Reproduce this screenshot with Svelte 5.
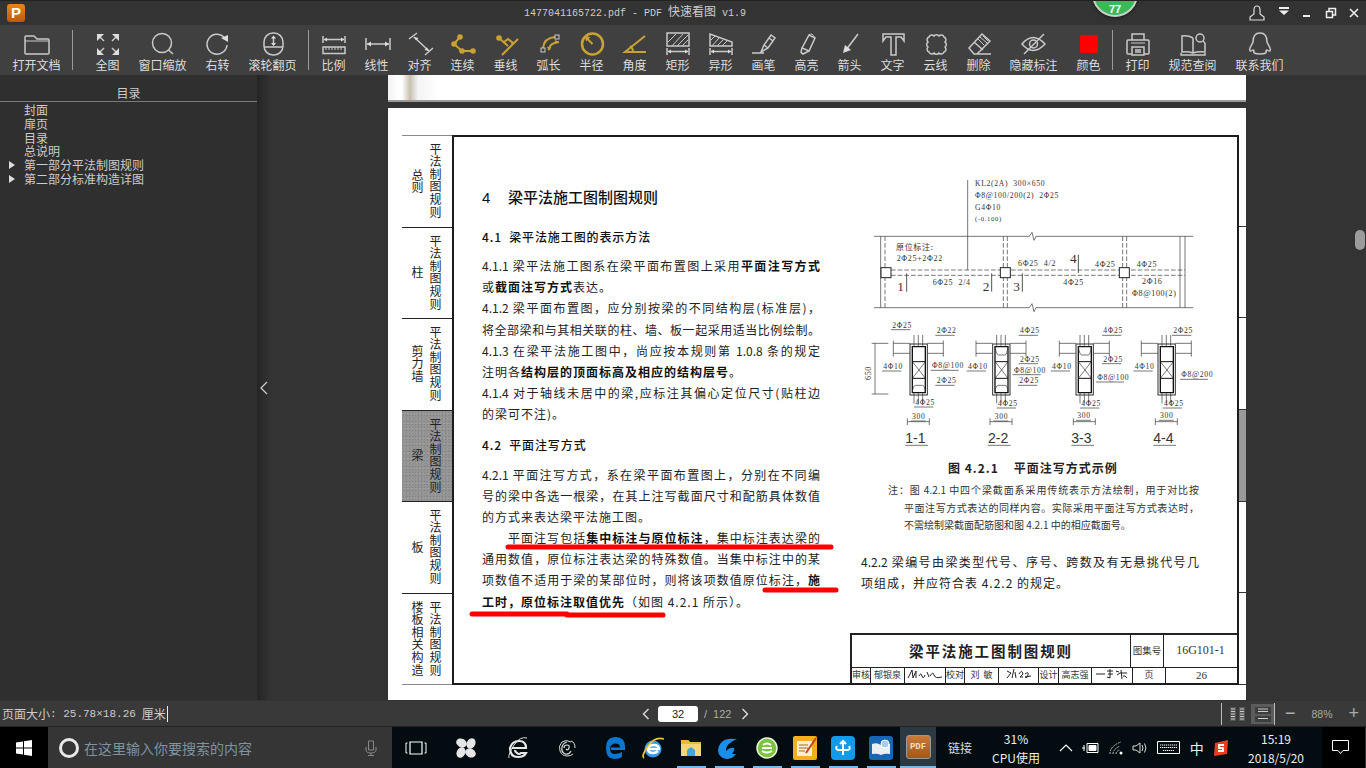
<script>
  const dimH = (y) => `<path d="M6 ${y - 3.5}v7M28 ${y - 3.5}v7M7 ${y}h20"/><path class="f" d="M7 ${y}l3-2v4zM27 ${y}l-3-2v4z"/>`;

  /* icons are drawn in a 34x28 box */
  const icons = {
    folder: `<path d="M5 22V6q0-1 1-1h8l3 3h11q1 0 1 1v13q0 1-1 1H6q-1 0-1-1z"/><path d="M5 10h24" stroke-width="1"/>`,
    fit: `<path d="M9 6l4 4M25 6l-4 4M9 21l4-4M25 21l-4-4"/><path class="f" d="M6 3h7L6 10zM28 3h-7l7 7zM6 24h7l-7-7zM28 24h-7l7-7z"/>`,
    zoom: `<circle cx="16" cy="12" r="9.5"/><path d="M22.5 19l4.5 4"/>`,
    rotate: `<path d="M23 6A10 10 0 1 0 26 14"/><path class="f" d="M20 7l7-3v7z"/>`,
    wheel: `<rect x="8" y="2" width="19" height="22" rx="9"/><path d="M8 16h19M17.5 6v8"/><path class="f" d="M17.5 4.5l-2.5 3h5zM17.5 15l-2.5-3h5z"/>`,
    scale: dimH(8.5) + `<rect x="6" y="16" width="22" height="6.5"/><path d="M9 16v3M12 16v3M15 16v3M18 16v3M21 16v3M24 16v3" stroke-width="1"/>`,
    line: `<path d="M6 7v12M30 7v12M7 13h22"/><path class="f" d="M7 13l4-2.5v5zM29 13l-4-2.5v5z"/>`,
    align: `<path d="M6 8l8-6M22 24l8-7M11 6l15 14"/><path class="f" d="M11 6l4.5 1-2.5 2.5zM26 20l-4.5-1 2.5-2.5z"/>`,
    chain: `<g class="g"><path d="M14 6l-6 7 8 7h11" stroke-width="2"/><circle class="gf" cx="14" cy="6" r="2.8"/><circle class="gf" cx="8" cy="13" r="2.8"/><circle class="gf" cx="16" cy="20" r="2.8"/><circle class="gf" cx="27" cy="20" r="2.8"/></g>`,
    perp: `<g class="g"><path d="M10 7l9 8M29 8L13 24M15 11l4-3 5 4-1.5 1" stroke-width="2"/><circle class="gf" cx="10" cy="7" r="2.8"/></g>`,
    arc: `<g class="g"><path d="M11 17Q12 7 23 6M17 19Q17 12 27 11" stroke-width="2"/><path class="gf" d="M27 11l-4-2v4zM17 20l-2-4h4z"/></g><rect x="9" y="17" width="4" height="4" stroke-width="1"/><rect x="23" y="4" width="4" height="4" stroke-width="1"/>`,
    radius: `<g class="g"><circle cx="17.5" cy="13" r="10.5" stroke-width="2.5"/><path d="M17.5 13l-7-7" stroke-width="2"/><path class="gf" d="M10 5l5.5 1-4.5 4.5z"/></g>`,
    angle: `<g class="g"><path d="M28 21H7L27 5M15 21q0-4-3-6" stroke-width="2"/></g>`,
    rect: `<rect x="6" y="2" width="22" height="13"/><path d="M7 11l8-8M11 15L22 3M16 15L27 4M21 15l6-6" stroke-width="1"/>` + dimH(20.5),
    poly: `<path d="M6 3v12h22v-4z"/><path d="M7 9l4-4M8 15l7-8M13 15l6-6M18 15l5-5" stroke-width="1"/>` + dimH(20.5),
    pen: `<path d="M14 21l3-7L24 4l4 3-7 10zM17 14l4 3M22 7l4 3M5 22h12"/>`,
    marker: `<path d="M12 17l7-13 6 3-6 13zM12 17l-1 4 2 2 6-3M14 23l-3-1"/><path d="M19 4q3-3 6 3" stroke-width="1"/>`,
    arrow: `<path d="M25 3L13 19"/><path class="f" d="M10 22l2-8 6 5z"/>`,
    text: `<path d="M7 3h21v7l-3-4h-5v18h-5V6h-5l-3 4z"/>`,
    cloud: `<path d="M10 6a3 3 0 0 1 5-1a3 3 0 0 1 5 0a3 3 0 0 1 5 1a3 3 0 0 1 1 5a3 3 0 0 1 0 5a3 3 0 0 1-1 5a3 3 0 0 1-5 1a3 3 0 0 1-5 0a3 3 0 0 1-5-1a3 3 0 0 1-1-5a3 3 0 0 1 0-5a3 3 0 0 1 1-5z"/>`,
    eraser: `<path d="M7 17L20 3l8 7-13 13h-3zM12 11l9 8M13 23h16"/><path d="M18 6l7 6M21 5l5 5M16 8l6 6" stroke-width="1"/>`,
    eye: `<path d="M5 13q11-13 23 0-12 13-23 0z"/><circle cx="16.5" cy="13" r="4"/><path d="M27 3L7 23"/>`,
    color: `<rect class="red" x="8" y="4" width="18" height="18" rx="2"/>`,
    print: `<path d="M11 9V3h12v6M11 23H7q-1 0-1-1V10q0-1 1-1h20q1 0 1 1v12q0 1-1 1h-4M11 16h12v8H11zM14 19h6M14 21h6"/><path d="M10 12h14" stroke-width="1"/>`,
    book: `<path d="M17 7q-5-3-11-2v16q6-1 11 1 5-2 12-1v-9M17 7v15M5 22v2h24v-2"/><circle cx="24" cy="7" r="4"/><path d="M27 10l2 2"/>`,
    qq: `<path d="M17 2c-5 0-7 4-7 9l-3 6c-1 3 0 4 3 2l1 1c-1 2 1 3 6 3s7-1 6-3l1-1c3 2 4 1 3-2l-3-6c0-5-2-9-7-9z"/>`
  };

  const tools = [
    { l: '打开文档', i: 'folder', w: 67 }, 'sep',
    { l: '全图', i: 'fit' }, { l: '窗口缩放', i: 'zoom', w: 67 }, { l: '右转', i: 'rotate' }, { l: '滚轮翻页', i: 'wheel', w: 67 }, 'sep',
    { l: '比例', i: 'scale' }, { l: '线性', i: 'line' }, { l: '对齐', i: 'align' }, { l: '连续', i: 'chain' }, { l: '垂线', i: 'perp' },
    { l: '弧长', i: 'arc' }, { l: '半径', i: 'radius' }, { l: '角度', i: 'angle' }, { l: '矩形', i: 'rect' }, { l: '异形', i: 'poly' },
    { l: '画笔', i: 'pen' }, { l: '高亮', i: 'marker' }, { l: '箭头', i: 'arrow' }, { l: '文字', i: 'text' }, { l: '云线', i: 'cloud' },
    { l: '删除', i: 'eraser' }, { l: '隐藏标注', i: 'eye', w: 67 }, { l: '颜色', i: 'color' }, 'sep',
    { l: '打印', i: 'print' }, { l: '规范查阅', i: 'book', w: 67 }, { l: '联系我们', i: 'qq', w: 67 }
  ];

  const toc = [
    { t: '封面' }, { t: '扉页' }, { t: '目录' }, { t: '总说明' },
    { t: '第一部分平法制图规则', kids: true }, { t: '第二部分标准构造详图', kids: true }
  ];

  const tabs = [
    { name: '总则' }, { name: '柱' }, { name: '剪力墙' }, { name: '梁', on: true }, { name: '板' }, { name: '楼板相关构造' }
  ];

  /* section drawing, coordinates are 3x screen px */
  const sections = [
    { dx: 0, name: '1-1', bot: 1, labels: [['2Φ25', 127, 473], ['2Φ22', 260, 490], ['4Φ10', 100, 597], ['Φ8@100', 246, 595], ['2Φ25', 260, 640], ['4Φ25', 196, 705], ['300', 186, 747]] },
    { dx: 248, name: '2-2', top: 1, bot: 1, labels: [['4Φ25', 510, 490], ['2Φ25', 510, 575], ['4Φ10', 354, 597], ['Φ8@100', 492, 608], ['2Φ25', 508, 640], ['4Φ25', 444, 708], ['300', 434, 747]] },
    { dx: 498, name: '3-3', top: 1, labels: [['4Φ25', 760, 490], ['2Φ25', 760, 575], ['4Φ10', 606, 597], ['Φ8@100', 742, 630], ['4Φ25', 694, 708], ['300', 682, 745]] },
    { dx: 744, name: '4-4', labels: [['2Φ25', 970, 490], ['4Φ10', 854, 597], ['Φ8@200', 994, 622], ['4Φ25', 942, 708], ['300', 930, 745]] }
  ];

  const beamLabels = [
    ['KL2(2A)  300×650', 375, 47, 23], ['Φ8@100/200(2)  2Φ25', 375, 85, 23], ['G4Φ10', 375, 120, 23], ['(-0.100)', 375, 153, 20],
    ['2Φ25+2Φ22', 140, 274, 24], ['6Φ25  2/4', 248, 345, 24], ['6Φ25  4/2', 504, 289, 24], ['4Φ25', 735, 291, 24],
    ['4Φ25', 640, 345, 24], ['4Φ25', 860, 291, 24], ['2Φ16', 876, 341, 24], ['Φ8@100(2)', 846, 378, 24],
    ['1', 142, 364, 40], ['2', 398, 364, 40], ['3', 490, 364, 40], ['4', 660, 280, 40]
  ];

  const petals = [0, 90, 180, 270];
</script>

<div class="win">
  <header class="titlebar">
    <div class="logo">P</div>
    <div class="title">1477041165722.pdf - PDF <span>快速看图</span> v1.9</div>
    <div class="badge">77</div>
    <div class="winbtns">
      <svg width="16" height="16" viewBox="0 0 16 16"><path d="M5 9V5q0-4 3-4t3 4v4l4 3v3H1v-3z" fill="none" stroke="#ddd" stroke-width="1.2"/></svg>
      <svg width="12" height="12" viewBox="0 0 12 12"><path d="M1 0h10v2H1zM1 3.5h10L6 8z" fill="#eee"/></svg>
      <svg width="10" height="10" viewBox="0 0 10 10"><path d="M1 7h7v2H1z" fill="#eee"/></svg>
      <svg width="12" height="12" viewBox="0 0 12 12"><path d="M1.5 4.5h6v6h-6zM4 4V1.5h6.5V8H8" fill="none" stroke="#eee" stroke-width="1.5"/></svg>
      <svg width="10" height="10" viewBox="0 0 10 10"><path d="M1 1l8 8M9 1L1 9" stroke="#eee" stroke-width="1.6"/></svg>
    </div>
  </header>

  <nav class="toolbar">
    {#each tools as t}
      {#if t === 'sep'}
        <span class="sep"></span>
      {:else}
        <button class="tool" style="width:{t.w ?? 43}px">
          <svg class="ico" width="34" height="28" viewBox="0 0 34 28">{@html icons[t.i]}</svg>
          <span>{t.l}</span>
        </button>
      {/if}
    {/each}
  </nav>

  <main class="main">
    <aside class="side">
      <div class="side-head">目录</div>
      <ul>
        {#each toc as row}
          <li class:kids={row.kids}>{row.t}</li>
        {/each}
      </ul>
    </aside>
    <div class="strip">
      <svg width="8" height="14" viewBox="0 0 8 14"><path d="M7 1L1 7l6 6" fill="none" stroke="#ccc" stroke-width="1.3"/></svg>
    </div>

    <div class="viewer">
      <div class="stub"></div>
      <article class="page">
        <div class="tabs">
          {#each tabs as tab}
            <div class="tab" class:on={tab.on}>
              <span class="tab-name">{tab.name}</span>
              <span class="tab-rule">平法制图规则</span>
            </div>
          {/each}
        </div>

        <div class="frame">
          <div class="col-left">
            <h1><i>4</i>梁平法施工图制图规则</h1>
            <h2 class="h-a">4.1&nbsp; 梁平法施工图的表示方法</h2>
            <p class="ln full first">4.1.1 梁平法施工图系在梁平面布置图上采用<b>平面注写方式</b></p>
            <p class="ln">或<b>截面注写方式</b>表达。</p>
            <p class="ln full">4.1.2 梁平面布置图，应分别按梁的不同结构层(标准层)，</p>
            <p class="ln full">将全部梁和与其相关联的柱、墙、板一起采用适当比例绘制。</p>
            <p class="ln full">4.1.3 在梁平法施工图中，尚应按本规则第 1.0.8 条的规定</p>
            <p class="ln">注明各<b>结构层的顶面标高及相应的结构层号</b>。</p>
            <p class="ln full">4.1.4 对于轴线未居中的梁,应标注其偏心定位尺寸(贴柱边</p>
            <p class="ln">的梁可不注)。</p>
            <h2 class="h-b">4.2&nbsp; 平面注写方式</h2>
            <p class="ln full first">4.2.1 平面注写方式，系在梁平面布置图上，分别在不同编</p>
            <p class="ln full">号的梁中各选一根梁，在其上注写截面尺寸和配筋具体数值</p>
            <p class="ln">的方式来表达梁平法施工图。</p>
            <p class="ln full indent">平面注写包括<b>集中标注与原位标注</b>，集中标注表达梁的</p>
            <p class="ln full">通用数值，原位标注表达梁的特殊数值。当集中标注中的某</p>
            <p class="ln full">项数值不适用于梁的某部位时，则将该项数值原位标注，<b>施</b></p>
            <p class="ln"><b>工时，原位标注取值优先</b>（如图 4.2.1 所示）。</p>
          </div>

          <div class="col-right">
            <svg class="drawing" width="370" height="290" viewBox="0 0 1110 870">
              <g class="thin">
                <path d="M353 30V300" />
                <path d="M72 199H538l8-12 6 24 6-12H1030M72 413H538l8-12 6 24 6-12H1030" />
                <path d="M92 199V413M990 199V413M1005 199V413" />
                <path d="M105 199V413M460 199V413M472 199V413M818 199V413M830 199V413M123 300H1005M123 316H1005" stroke-dasharray="14 6" />
                <path d="M170 310v55M425 310v55M517 310v55M685 254v55" stroke-width="2.5" />
              </g>
              <rect class="col" x="93" y="293" width="30" height="30" />
              <rect class="col" x="451" y="293" width="30" height="30" />
              <rect class="col" x="808" y="293" width="30" height="30" />
              <text class="cjk" x="138" y="240">原位标注:</text>
              {#each beamLabels as b}
                <text class="lab" x={b[1]} y={b[2]} font-size={b[3]}>{b[0]}</text>
              {/each}

              <g class="thin">
                <path d="M75 520V672M65 520h50M65 672h50" />
              </g>
              <text class="lab" x="0" y="0" font-size="24" transform="translate(62 630) rotate(-90)">650</text>

              {#each sections as s}
                <g transform="translate({s.dx} 0)">
                  <path class="thin" d="M130 520H180M232 520H280M130 550H180M232 550H280M130 512v48M280 512v48" />
                  <rect class="beam" x="180" y="522" width="52" height="153" />
                  <path class="stir" d="M187 530H226V668H187Z" />
                  <path class="thin" d="M187 575L207 600 187 625M226 575L207 600 226 625" />
                  <path class="stir2" d="M187 575H226M187 625H226" />
                  {#if s.top}<path class="thin" d="M187 530q4 25 10 25h20q6 0 9-25" />{/if}
                  {#if s.bot}<path class="thin" d="M187 668q2-22 10-22h20q8 0 9 22" />{/if}
                  <path class="thin" d="M192 495V530M205 495V530M218 495V530M192 668V700M205 668V700M218 668V700" />
                  <path class="thin" d="M172 745v20M238 745v20M172 755H238" />
                  <text class="sec" x="166" y="818">{s.name}</text>
                  <path class="thin" d="M166 826H234" />
                </g>
                {#each s.labels as l}
                  <text class="lab" x={l[1]} y={l[2]} font-size="23">{l[0]}</text>
                  <path class="thin" d="M{l[1] - 4} {l[2] + 6}h{l[0].length * 13 + 6}" />
                {/each}
              {/each}
            </svg>

            <div class="caption">图 4.2.1&nbsp;&nbsp;&nbsp; 平面注写方式示例</div>
            <div class="note">
              <p class="full">注：图 4.2.1 中四个梁截面系采用传统表示方法绘制，用于对比按</p>
              <p class="sub full">平面注写方式表达的同样内容。实际采用平面注写方式表达时，</p>
              <p class="sub">不需绘制梁截面配筋图和图 4.2.1 中的相应截面号。</p>
            </div>
            <div class="next">
              <p class="ln full">4.2.2 梁编号由梁类型代号、序号、跨数及有无悬挑代号几</p>
              <p class="ln">项组成，并应符合表 4.2.2 的规定。</p>
            </div>

            <div class="stamp">
              <div class="stamp-top">
                <div class="stamp-title">梁平法施工图制图规则</div>
                <div class="stamp-key">图集号</div>
                <div class="stamp-val">16G101-1</div>
              </div>
              <div class="stamp-row">
                <span style="width:19px">审核</span>
                <span style="width:34px">郁银泉</span>
                <span style="width:41px"><svg width="38" height="12" viewBox="0 0 38 12"><path d="M2 10L6 2l1 8 3-7v7M13 8q2-4 3 0t3-1M21 4l2 5M24 8q3-5 4-1 1 4 8 2" fill="none" stroke="#222"/></svg></span>
                <span style="width:19px">校对</span>
                <span style="width:34px">刘&nbsp; 敏</span>
                <span style="width:40px"><svg width="30" height="12" viewBox="0 0 30 12"><path d="M3 3l4 2-4 5M10 1L8 10M11 4l1 6M15 6q3-5 4 0l-3 3h3M21 6q4-3 3 1t-3 2l6-1" fill="none" stroke="#222"/></svg></span>
                <span style="width:20px">设计</span>
                <span style="width:33px">高志强</span>
                <span style="width:41px"><svg width="34" height="12" viewBox="0 0 34 12"><path d="M1 6h9M12 3h6M15 1v9l-3-1M13 6h5M21 3l3 1M22 7l3-2M26 2l1 9M25 5h7M28 8q2-1 4 2" fill="none" stroke="#222"/></svg></span>
                <span style="width:33px">页</span>
                <span class="end">26</span>
              </div>
            </div>
          </div>

          <svg class="marks" width="787" height="550" viewBox="452 135 787 550">
            <path d="M508 547H831" />
            <path d="M765 590H836" />
            <path d="M472 614H567" />
            <path d="M567 615H663" />
          </svg>
        </div>

        <div class="ticks">
          {#each tabs as tab}
            <div class="tick" class:on={tab.on}></div>
          {/each}
        </div>
      </article>
      <div class="thumb"></div>
    </div>
  </main>

  <footer class="status">
    <div class="size">页面大小<span class="mono">: 25.78×18.26</span>厘米<i class="caret"></i></div>
    <div class="pager">
      <svg width="8" height="12" viewBox="0 0 8 12"><path d="M6.5 1L1.5 6l5 5" fill="none" stroke="#ddd" stroke-width="1.4"/></svg>
      <div class="pageno">32</div>
      <span class="total">/ 122</span>
      <svg width="8" height="12" viewBox="0 0 8 12"><path d="M1.5 1l5 5-5 5" fill="none" stroke="#ddd" stroke-width="1.4"/></svg>
    </div>
    <div class="views">
      <div class="view">
        <svg width="18" height="16" viewBox="0 0 18 16"><path d="M1 1h6v14H1zM10 1h6v14h-6z" fill="#555" /><path d="M2 3h4M2 5.5h4M2 8h4M2 10.5h4M2 13h4M11 3h4M11 5.5h4M11 8h4M11 10.5h4M11 13h4" stroke="#ccc"/></svg>
      </div>
      <div class="view active">
        <svg width="18" height="18" viewBox="0 0 18 18"><path d="M1 2h16v7H1zM1 11h16v6H1z" fill="#3e3e3e" /><path d="M4 4h10M4 6.5h10M4 13.5h10" stroke="#ccc"/></svg>
      </div>
    </div>
    <div class="zoomer">
      <span>−</span>
      <em>88%</em>
      <span>+</span>
    </div>
  </footer>

  <div class="taskbar">
    <div class="start">
      <svg width="16" height="16" viewBox="0 0 16 16"><path d="M0 2.5l7-1v6H0zM8 1.3l8-1.3v7.5H8zM0 8.5h7v6l-7-1zM8 8.5h8V16l-8-1.3z" fill="#fff"/></svg>
    </div>
    <div class="search">
      <span class="ring"></span>
      <span class="hint">在这里输入你要搜索的内容</span>
      <svg class="mic" width="12" height="16" viewBox="0 0 12 16"><path d="M3.5 1h5v9h-5zM1 7v3q0 3 5 3t5-3V7M6 13v2M3 15.5h6" fill="none" stroke="#888"/></svg>
    </div>
    <div class="tb w48">
      <svg width="22" height="14" viewBox="0 0 22 14"><path d="M5 1h12v12H5z" fill="none" stroke="#fff" stroke-width="1.2"/><path d="M2.5 2H1v10h1.5M19.5 2H21v10h-1.5" fill="none" stroke="#fff"/></svg>
    </div>
    <div class="tb w52">
      <svg width="22" height="22" viewBox="0 0 22 22">
        {#each petals as a}
          <ellipse cx="6.5" cy="6" rx="5.5" ry="4.3" fill="#e6e6e6" transform="rotate({a} 11 11) rotate(25 6.5 6)" />
        {/each}
      </svg>
    </div>
    <div class="tb w51">
      <svg width="22" height="24" viewBox="0 0 22 24"><path d="M5 12h14q0-7-7-7T3 12q0 9 8 9 6 0 8-4h-5q-2 2-4 0-2-1-2-3" fill="none" stroke="#e8e8e8" stroke-width="2.2"/><path d="M2 22Q1 18 7 9t13-7" fill="none" stroke="#ddd"/></svg>
    </div>
    <div class="tb w53">
      <svg width="20" height="20" viewBox="0 0 20 20"><path d="M14 4q-5-3-9 0-4 4-2 9 2 5 7 5 4 0 6-2M18 10q0-6-4-7" fill="none" stroke="#ddd"/><path d="M10 4q-4 1-5 5-1 5 3 7 4 1 6-3M7 10q0-3 3-3t2 3-3 1" fill="none" stroke="#ddd" stroke-width="1.2"/></svg>
    </div>
    <div class="tb w38">
      <svg width="20" height="24" viewBox="0 0 20 24"><path d="M6 11.5h9q0-4-4.5-4T5 12q0 6 5 6 4 0 7-2v5q-3 2-8 2-8 0-8-11T11 1q9 0 9 10v3H6z" fill="#0a78d1"/></svg>
    </div>
    <div class="tb w38">
      <svg width="24" height="24" viewBox="0 0 24 24"><circle cx="12" cy="13" r="8.5" fill="#3a9be0"/><path d="M7 13h11q0-4-5.5-4T7 13q0 4 5 4 3 0 5-2" fill="none" stroke="#fff" stroke-width="2.5"/><path d="M3 22Q0 20 7 10T23 3" fill="none" stroke="#e8c23a" stroke-width="1.8"/></svg>
    </div>
    <div class="tb w38 on">
      <svg width="22" height="22" viewBox="0 0 22 22"><path d="M1 3h7l2 2h11v14H1z" fill="#f3d67a"/><path d="M1 3h7l2 2h11v2H1z" fill="#e8b93f"/><path d="M7 13l4-3 4 3v6H7z" fill="#3ea6dc"/></svg>
    </div>
    <div class="tb w38 on">
      <svg width="24" height="24" viewBox="0 0 24 24"><path d="M18 3Q6 1 2 10q-3 8 4 12 8 3 13-4-1 0-4 0 3-4 2-6-4-1-8 3-1-7 11-12z" fill="#1b8fe8"/></svg>
    </div>
    <div class="tb w38 on">
      <svg width="24" height="24" viewBox="0 0 24 24"><circle cx="12" cy="12" r="10" fill="#7cc43f" stroke="#e9f4dc" stroke-width="1.5"/><path d="M7 12h10M7 15q5 3 10 0M8 9q4-3 8 0" fill="none" stroke="#fff" stroke-width="2"/></svg>
    </div>
    <div class="tb w38 on">
      <svg width="24" height="24" viewBox="0 0 24 24"><rect width="24" height="24" rx="2" fill="#f2b01e"/><rect x="4" y="5" width="15" height="15" fill="#fbeed2"/><path d="M6 9h9M6 12h9M6 15h6" stroke="#a06a2a"/><path d="M23 2L13 17" stroke="#c8432a" stroke-width="2"/></svg>
    </div>
    <div class="tb w38 on">
      <svg width="24" height="24" viewBox="0 0 24 24"><rect width="24" height="24" rx="4" fill="#129bea"/><path d="M12 5v14M9 8l3-3 3 3M6 10q-2 3 1 4h10q3-1 1-4" fill="none" stroke="#fff" stroke-width="2"/></svg>
    </div>
    <div class="tb w38 on">
      <svg width="24" height="24" viewBox="0 0 24 24"><rect width="24" height="24" rx="3" fill="#1766b5"/><path d="M3 8q5-2 9 1 4-3 9-1v10q-5-1-9 1-4-2-9-1z" fill="#e9eef2"/><circle cx="16" cy="8" r="4" fill="#a8cbe6" stroke="#fff"/></svg>
    </div>
    <div class="tb app">
      <div class="pdfmark">PDF</div>
    </div>
    <div class="tray-link">链接</div>
    <div class="cpu"><div>31%</div><div>CPU使用</div></div>
    <div class="tray">
      <svg width="14" height="8" viewBox="0 0 14 8"><path d="M1 7l6-6 6 6" fill="none" stroke="#fff" stroke-width="1.2"/></svg>
      <svg width="17" height="12" viewBox="0 0 17 12"><path d="M5 1.5h11v9H5z" fill="none" stroke="#fff"/><path d="M7 3.5h7v5H7zM0 6h3M2 3v6" fill="#fff" stroke="#fff"/></svg>
      <svg width="14" height="14" viewBox="0 0 14 14"><path d="M1 13Q1 5 12 1M4 13q0-5 7-8M7 13q0-3 4-4" fill="none" stroke="#bbb" stroke-dasharray="2 .8"/><circle cx="12" cy="12" r="1.5" fill="#fff"/></svg>
      <svg width="16" height="14" viewBox="0 0 16 14"><path d="M1 5h3l4-3v10L4 9H1zM10 4q2 3 0 6M12.5 2.5q3 4.5 0 9" fill="none" stroke="#ddd"/></svg>
      <svg width="23" height="13" viewBox="0 0 23 13"><path d="M.5.5h22v12H.5z" fill="none" stroke="#fff"/><path d="M3 4h17M3 6.5h17M6 9.5h11" stroke="#fff" stroke-dasharray="1.3 .7"/></svg>
      <span class="ime">中</span>
      <svg width="16" height="16" viewBox="0 0 16 16"><path d="M2 3L15 0l-1 14-13 2z" fill="#e8401c"/><path d="M11 5H6v3h4v3H5" fill="none" stroke="#fff" stroke-width="1.8"/></svg>
    </div>
    <div class="clock"><div>15:19</div><div>2018/5/20</div></div>
    <div class="notify">
      <svg width="17" height="15" viewBox="0 0 17 15"><path d="M.5.5h16v10H11l-2.5 3-2.5-3H.5z" fill="none" stroke="#fff"/></svg>
    </div>
  </div>
</div>

<style>
  :global(body) {
    margin: 0;
    background: #333;
  }
  * { box-sizing: border-box; }

  .win {
    width: 1366px;
    height: 768px;
    display: flex;
    flex-direction: column;
    overflow: hidden;
    font-family: "Noto Sans CJK SC", "Liberation Sans", sans-serif;
    color: #ddd;
  }

  /* ── title bar ── */
  .titlebar {
    position: relative;
    flex: 0 0 25px;
    height: 25px;
    background: #333;
    border-top: 1px solid #222;
    overflow: hidden;
  }
  .logo {
    position: absolute;
    left: 7px;
    top: 3px;
    width: 18px;
    height: 18px;
    border-radius: 3px;
    background: linear-gradient(#e8861c, #b85c08);
    color: #fff;
    font: bold 15px/18px "Liberation Sans", sans-serif;
    text-align: center;
  }
  .title {
    position: absolute;
    left: 524px;
    top: 2px;
    font: 10px/20px "Liberation Mono", "Noto Sans CJK SC", monospace;
    color: #ccc;
    white-space: pre;
  }
  .title span {
    font-size: 12px;
  }
  .badge {
    position: absolute;
    left: 1092px;
    top: -30px;
    width: 46px;
    height: 46px;
    border-radius: 50%;
    border: 2px solid #c8d0c8;
    background: #3cb85a;
    color: #fff;
    font: bold 11px/13px "Liberation Sans", sans-serif;
    padding-top: 30px;
    text-align: center;
    box-shadow: 0 1px 3px #0008;
  }
  .winbtns {
    position: absolute;
    left: 1249px;
    top: 4px;
    width: 110px;
    height: 16px;
    display: flex;
    align-items: center;
    justify-content: space-between;
  }

  /* ── toolbar ── */
  .toolbar {
    flex: 0 0 50px;
    height: 50px;
    background: #404040;
    display: flex;
    padding-left: 3px;
  }
  .tool {
    flex: none;
    height: 50px;
    padding: 6px 0 0;
    border: 0;
    background: none;
    color: #ddd;
    font: 12px/18px "Noto Sans CJK SC", sans-serif;
    display: flex;
    flex-direction: column;
    align-items: center;
    white-space: nowrap;
  }
  .tool span {
    margin-top: -3px;
  }
  .ico {
    flex: none;
    fill: none;
    stroke: #c9c9c9;
    stroke-width: 1.5;
  }
  .ico :global(.f) { fill: #ddd; stroke: none; }
  .ico :global(.g) { stroke: #c9a233; }
  .ico :global(.gf) { fill: #c9a233; stroke: none; }
  .ico :global(.red) { fill: #f00; stroke: none; }
  .sep {
    flex: none;
    width: 1px;
    height: 40px;
    margin: 5px 13px 0 2px;
    background: #9a9a9a;
  }
  .sep:nth-child(7) { margin: 5px 3px 0 2px; }
  .sep:nth-child(26) { margin: 5px 3px 0 2px; }

  /* ── main area ── */
  .main {
    flex: 0 0 625px;
    height: 625px;
    display: flex;
    background: #333;
    overflow: hidden;
  }
  .side {
    flex: 0 0 257px;
    background: #2f2f2f;
    font-size: 12px;
    color: #ccc;
  }
  .side-head {
    height: 27px;
    padding-top: 8px;
    line-height: 20px;
    text-align: center;
    border-bottom: 1px solid #7a7a7a;
  }
  .side ul {
    margin: 0;
    padding: 1px 0 0 24px;
    list-style: none;
  }
  .side li {
    position: relative;
    height: 13.8px;
    line-height: 14px;
    white-space: nowrap;
  }
  .kids::before {
    content: "";
    position: absolute;
    left: -15px;
    top: 3px;
    border-left: 6px solid #ddd;
    border-top: 4px solid transparent;
    border-bottom: 4px solid transparent;
  }
  .strip {
    flex: 0 0 13px;
    display: flex;
    align-items: center;
    justify-content: center;
    background: linear-gradient(90deg, #242424, #333);
  }
  .viewer {
    position: relative;
    flex: 1;
    padding-left: 118px;
    display: flex;
    flex-direction: column;
    gap: 6px;
  }
  .stub {
    flex: 0 0 27px;
    width: 858px;
    border-bottom: 2px solid #999;
    background: linear-gradient(90deg, #f2f2f2 0, #fff 10px, #fff 14px, #c8c0b0 22px, #f4f4f4 30px, #fff 50px);
  }
  .thumb {
    position: absolute;
    right: 1px;
    top: 155px;
    width: 10px;
    height: 20px;
    border-radius: 5px;
    background: #9c9c9c;
  }

  /* ── scanned page ── */
  .page {
    flex: none;
    width: 858px;
    height: 592px;
    padding: 27px 0 0 14px;
    background: #fff;
    display: flex;
    align-items: flex-start;
    color: #222;
  }
  .tabs {
    flex: 0 0 50px;
    height: 550px;
    display: flex;
    flex-direction: column;
    border-top: 1px solid #888;
  }
  .tab {
    flex: 1;
    display: flex;
    align-items: center;
    border-bottom: 1px solid #222;
  }
  .tab:last-child { border-bottom-color: #888; }
  .tab.on {
    background-color: #939393;
    background-image:
      radial-gradient(#0002 0.6px, #0000 1px),
      radial-gradient(#fff2 0.6px, #0000 1px);
    background-size: 3px 3px, 4px 5px;
  }
  .tab-name, .tab-rule {
    writing-mode: vertical-rl;
    white-space: nowrap;
    font-size: 12px;
    line-height: 14px;
    letter-spacing: 0.6px;
  }
  .tab-name { width: 14px; margin-left: 8px; }
  .tab-rule { width: 14px; margin-left: 4px; }

  .frame {
    position: relative;
    flex: 0 0 787px;
    height: 550px;
    border: 2px solid #1c1c1c;
    display: flex;
  }
  .marks {
    position: absolute;
    left: -2px;
    top: -2px;
    pointer-events: none;
    fill: none;
    stroke: #f00;
    stroke-width: 5;
    stroke-linecap: round;
  }
  .ticks {
    flex: 0 0 7px;
    height: 550px;
    display: flex;
    flex-direction: column;
  }
  .tick { flex: 1; border-bottom: 1px solid #333; }
  .tick.on { background: #999; }

  .col-left {
    flex: 0 0 396px;
    padding: 48px 0 0 28px;
  }
  h1 {
    margin: 0;
    font-size: 15px;
    line-height: 24px;
    font-weight: 500;
    color: #111;
  }
  h1 i {
    display: inline-block;
    width: 26px;
    font-style: normal;
    font-family: "Liberation Sans", sans-serif;
  }
  h2 {
    margin: 0;
    font-size: 12px;
    line-height: 21px;
    font-weight: 500;
    letter-spacing: 0.9px;
    color: #111;
  }
  .h-a { margin-top: 16px; }
  .h-b { margin-top: 9px; }
  .ln {
    margin: 0;
    width: 338px;
    font-size: 12px;
    line-height: 21.2px;
    height: 21.2px;
    letter-spacing: 1px;
    white-space: nowrap;
    color: #222;
  }
  .first { margin-top: 8px; }
  .h-b + .first { margin-top: 9px; }
  .indent { padding-left: 26px; }
  .full {
    letter-spacing: 0;
    white-space: normal;
    text-align: justify;
    text-align-last: justify;
  }
  .ln b { font-weight: 700; color: #111; }

  .col-right {
    flex: 1;
    display: flex;
    flex-direction: column;
    padding-top: 33px;
    min-width: 0;
  }
  .drawing {
    flex: none;
    display: block;
    font-family: "Liberation Serif", serif;
    fill: #333;
  }
  .lab { letter-spacing: 2px; white-space: pre; }
  .thin { fill: none; stroke: #333; stroke-width: 2; }
  .col { fill: #fff; stroke: #222; stroke-width: 3; }
  .beam { fill: #fff; stroke: #333; stroke-width: 3; }
  .stir { fill: none; stroke: #111; stroke-width: 4; }
  .stir2 { fill: none; stroke: #111; stroke-width: 3; }
  .cjk { font-family: "Noto Sans CJK SC", sans-serif; font-size: 24px; letter-spacing: 2px; }
  .sec { font-family: "Liberation Sans", sans-serif; font-size: 42px; }

  .caption {
    margin: 0 0 0 98px;
    font-size: 12px;
    line-height: 16px;
    letter-spacing: 1px;
    font-weight: 700;
    color: #222;
    white-space: nowrap;
  }
  .note {
    margin: 5px 0 0 38px;
    width: 311px;
    font-size: 10px;
    line-height: 17.5px;
    color: #333;
  }
  .note p { margin: 0; height: 17.5px; }
  .note .sub { margin-left: 16px; width: 295px; }
  .next { margin: 17px 0 0 11px; }

  .stamp {
    margin-top: auto;
    font-size: 9px;
    border-top: 2px solid #222;
    border-left: 2px solid #222;
    color: #333;
  }
  .stamp-top {
    height: 33px;
    display: flex;
    border-bottom: 1px solid #222;
  }
  .stamp-title {
    flex: 0 0 279px;
    font-size: 14.5px;
    font-weight: 700;
    letter-spacing: 1.9px;
    line-height: 31px;
    text-align: center;
    color: #222;
    border-right: 1px solid #222;
  }
  .stamp-key {
    flex: 0 0 33px;
    line-height: 31px;
    text-align: center;
    border-right: 1px solid #222;
    font-size: 9.5px;
  }
  .stamp-val {
    flex: 1;
    text-align: center;
    font: 12px/31px "Liberation Serif", serif;
  }
  .stamp-row {
    height: 15px;
    display: flex;
    line-height: 14px;
    text-align: center;
    white-space: nowrap;
  }
  .stamp-row span {
    flex: none;
    height: 15px;
    border-right: 1px solid #222;
    overflow: hidden;
  }
  .stamp-row .end {
    flex: 1;
    border-right: 0;
    font: 11px/15px "Liberation Serif", serif;
  }

  /* ── status bar ── */
  .status {
    position: relative;
    flex: 0 0 27px;
    height: 27px;
    background: #393939;
    border-top: 1px solid #333;
    display: flex;
    align-items: center;
    font-size: 12px;
    color: #ccc;
    border-bottom: 1px solid #222;
  }
  .size {
    flex: 0 0 594px;
    padding-left: 2px;
    display: flex;
    align-items: center;
    white-space: pre;
  }
  .mono { font: 11px "Liberation Mono", monospace; margin-right: 6px; }
  .caret {
    width: 1px;
    height: 16px;
    margin-left: 1px;
    background: #eee;
  }
  .pager {
    flex: 0 0 627px;
    padding-left: 48px;
    display: flex;
    align-items: center;
  }
  .pageno {
    width: 40px;
    height: 16px;
    margin-left: 8px;
    border-radius: 3px;
    background: #fff;
    color: #222;
    font: 11px/16px "Liberation Sans", sans-serif;
    text-align: center;
  }
  .total {
    width: 43px;
    padding-left: 6px;
    font: 11px "Liberation Sans", sans-serif;
    color: #aaa;
    word-spacing: 3px;
  }
  .views {
    flex: 0 0 53px;
    height: 22px;
    display: flex;
    border-left: 1px solid #bbb;
    border-right: 1px solid #bbb;
    padding-left: 7px;
    gap: 4px;
    align-items: center;
  }
  .view { height: 20px; width: 18px; display: flex; align-items: center; }
  .view.active {
    width: 23px;
    background: #5c5c5c;
    justify-content: center;
  }
  .zoomer {
    flex: 1;
    display: flex;
    justify-content: space-between;
    align-items: center;
    padding: 0 7px 0 10px;
    color: #aaa;
  }
  .zoomer span { font: 18px "Liberation Sans", sans-serif; }
  .zoomer em { font: 10.5px "Liberation Sans", sans-serif; }

  /* ── taskbar ── */
  .taskbar {
    flex: 0 0 41px;
    height: 41px;
    background: #030c10;
    display: flex;
    align-items: center;
    color: #eee;
  }
  .start {
    flex: 0 0 48px;
    height: 100%;
    background: #000;
    display: flex;
    align-items: center;
    justify-content: center;
  }
  .search {
    flex: 0 0 344px;
    height: 100%;
    background: #353535;
    display: flex;
    align-items: center;
    padding-left: 11px;
  }
  .ring {
    width: 20px;
    height: 20px;
    border-radius: 50%;
    border: 3px solid #e8e8e8;
  }
  .hint {
    margin-left: 5px;
    font-size: 14px;
    color: #7d94a0;
    white-space: nowrap;
  }
  .mic { margin-left: 113px; }
  .tb {
    position: relative;
    flex: none;
    height: 100%;
    display: flex;
    align-items: center;
    justify-content: center;
  }
  .w48 { width: 48px; }
  .w52 { width: 52px; }
  .w51 { width: 51px; }
  .w53 { width: 53px; padding-right: 6px; }
  .w38 { width: 38px; }
  .tb.on::after {
    content: "";
    position: absolute;
    left: 5px;
    right: 4px;
    bottom: 0;
    height: 2px;
    background: #76b9ed;
  }
  .app {
    width: 36px;
    background: #2b3a42;
    border-bottom: 2px solid #76b9ed;
  }
  .pdfmark {
    width: 25px;
    height: 24px;
    border-radius: 3px;
    background: linear-gradient(#c97a34, #9e5a1c);
    border: 1px solid #999;
    color: #f4dcc0;
    font: bold 9px/22px "Liberation Mono", monospace;
    text-align: center;
  }
  .tray-link {
    flex: 0 0 48px;
    text-align: center;
    font-size: 12px;
    color: #ddd;
  }
  .cpu {
    flex: 0 0 64px;
    text-align: center;
    font-size: 12px;
    line-height: 19px;
  }
  .tray {
    flex: 0 0 196px;
    display: flex;
    align-items: center;
    justify-content: space-between;
    padding: 0 15px 0 11px;
    height: 100%;
  }
  .ime { font-size: 14px; }
  .clock {
    flex: 0 0 64px;
    text-align: center;
    font-size: 12px;
    line-height: 19px;
    white-space: nowrap;
  }
  .notify {
    flex: 1;
    height: 100%;
    background: #000;
    display: flex;
    align-items: center;
    justify-content: center;
    padding-right: 7px;
    margin-left: 14px;
    border-right: 1px solid #333;
  }
</style>
